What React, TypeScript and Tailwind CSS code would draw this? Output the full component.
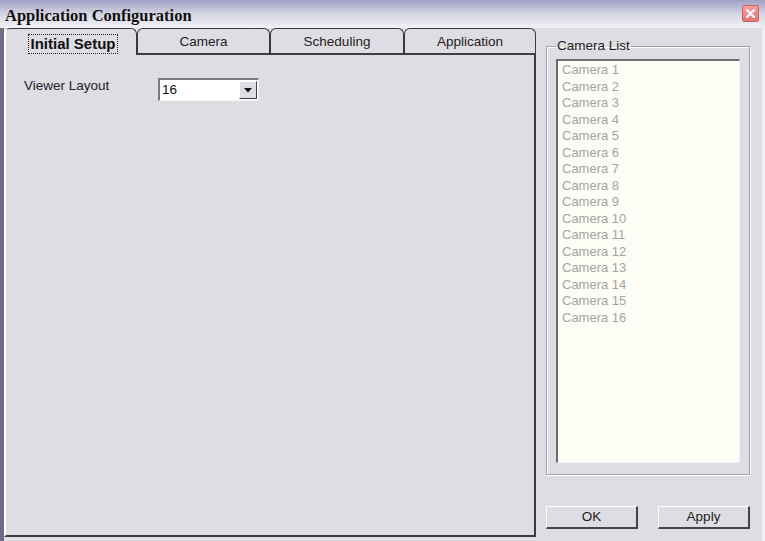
import React from 'react';

const cameras = Array.from({ length: 16 }, (_, i) => `Camera ${i + 1}`);

const tabs = [
  { label: 'Initial Setup', width: 'w-[133px]', active: true },
  { label: 'Camera', width: 'w-[133px]', active: false },
  { label: 'Scheduling', width: 'w-[134px]', active: false },
  { label: 'Application', width: 'w-[132px]', active: false },
];

const Tab = ({ label, width, active }: { label: string; width: string; active: boolean }) => (
  <div
    className={
      active
        ? `${width} h-[27px] flex items-center justify-center border-t border-r border-l-2 border-t-[#3a3a3a] border-r-[#3a3a3a] border-l-white rounded-t-[6px] bg-[#dedde3]`
        : `${width} h-[27px] flex items-center justify-center border-t border-x border-b-2 border-t-[#3a3a3a] border-x-[#3a3a3a] border-b-[#404040] rounded-t-[6px] bg-[#dedde3]`
    }
  >
    {active ? (
      <span className="mt-[3px] ml-[4px] px-[1px] leading-[18px] border border-dotted border-[#222] font-bold text-[15px] text-[#111]">
        {label}
      </span>
    ) : (
      <span className="mt-[2px] text-[13.5px] text-[#222]">{label}</span>
    )}
  </div>
);

const RaisedButton = ({ children }: { children: React.ReactNode }) => (
  <button className="w-[92px] h-[23px] bg-[#dedde3] border-t border-l border-t-white border-l-white border-b-2 border-r-2 border-b-[#454545] border-r-[#454545] text-[13.5px] text-[#222] leading-none">
    {children}
  </button>
);

export default function App() {
  return (
    <div className="w-[765px] h-[541px] overflow-hidden bg-[#dedde3] flex flex-col font-['Liberation_Sans',Arial,sans-serif]">
      {/* title bar */}
      <div className="h-[28px] flex items-center justify-between bg-gradient-to-b from-[#a0a0c4] via-[#d6d6e4] to-[#f1f1f5]">
        <span className="pl-[5px] pt-[4px] font-['Liberation_Serif',serif] font-bold text-[16.5px] text-[#111]">
          Application Configuration
        </span>
        <div className="mr-[6px] mb-[1px] w-[17px] h-[17px] rounded-[2px] border border-[#d06060] bg-gradient-to-b from-[#f2a0a0] to-[#e07878] flex items-center justify-center">
          <svg width="9" height="9" viewBox="0 0 9 9">
            <path d="M1 1 L8 8 M8 1 L1 8" stroke="#fff" strokeWidth="2" strokeLinecap="round" />
          </svg>
        </div>
      </div>

      <div className="flex flex-1">
        {/* left tab control */}
        <div className="w-[536px] flex flex-col border-l-4 border-[#6d6c82]">
          <div className="flex">
            {tabs.map((t) => (
              <Tab key={t.label} {...t} />
            ))}
          </div>
          <div className="h-[482px] border-l-2 border-l-white border-r-2 border-r-[#3c3c3c] border-b-2 border-b-[#3c3c3c] pt-[23px] pl-[18px]">
            <div className="flex items-start">
              <span className="w-[134px] text-[13.5px] leading-[16px] text-[#222]">Viewer Layout</span>
              <div className="w-[101px] h-[23px] bg-white border-t-2 border-l-2 border-t-[#7a7a7a] border-l-[#7a7a7a] border-b border-r border-b-[#f4f4f4] border-r-[#f4f4f4] flex items-center justify-between pr-[1px]">
                <span className="pl-[2px] text-[13.5px] text-[#111]">16</span>
                <div className="w-[18px] h-[18px] bg-[#dedde3] border-t border-l border-t-white border-l-white border-b border-r border-b-[#404040] border-r-[#404040] flex items-center justify-center">
                  <svg width="8" height="5" viewBox="0 0 8 5">
                    <path d="M0 0 H8 L4 4.5 Z" fill="#111" />
                  </svg>
                </div>
              </div>
            </div>
          </div>
        </div>

        {/* right column */}
        <div className="flex-1 flex flex-col pl-[10px] pt-[11px] border-r-[3px] border-[#f0f0f3]">
          <fieldset className="w-[204px] h-[436px] border border-[#a3a2a8] shadow-[inset_1px_1px_0_#fff,1px_1px_0_#fff] px-[9px] pb-[11px]">
            <legend className="px-[1px] text-[13.5px] leading-[14px] text-[#222]">Camera List</legend>
            <div className="mt-[6px] h-[404px] bg-[#fdfdf6] border-t-2 border-l-2 border-t-[#6e6e6e] border-l-[#6e6e6e] border-b border-r border-b-[#f2f2f2] border-r-[#f2f2f2] pl-[4px] pt-[1px]">
              {cameras.map((c) => (
                <div key={c} className="text-[13px] leading-[16.5px] text-[#a4a4a4]">
                  {c}
                </div>
              ))}
            </div>
          </fieldset>
          <div className="mt-[31px] flex gap-[20px]">
            <RaisedButton>OK</RaisedButton>
            <RaisedButton>Apply</RaisedButton>
          </div>
        </div>
      </div>
    </div>
  );
}
